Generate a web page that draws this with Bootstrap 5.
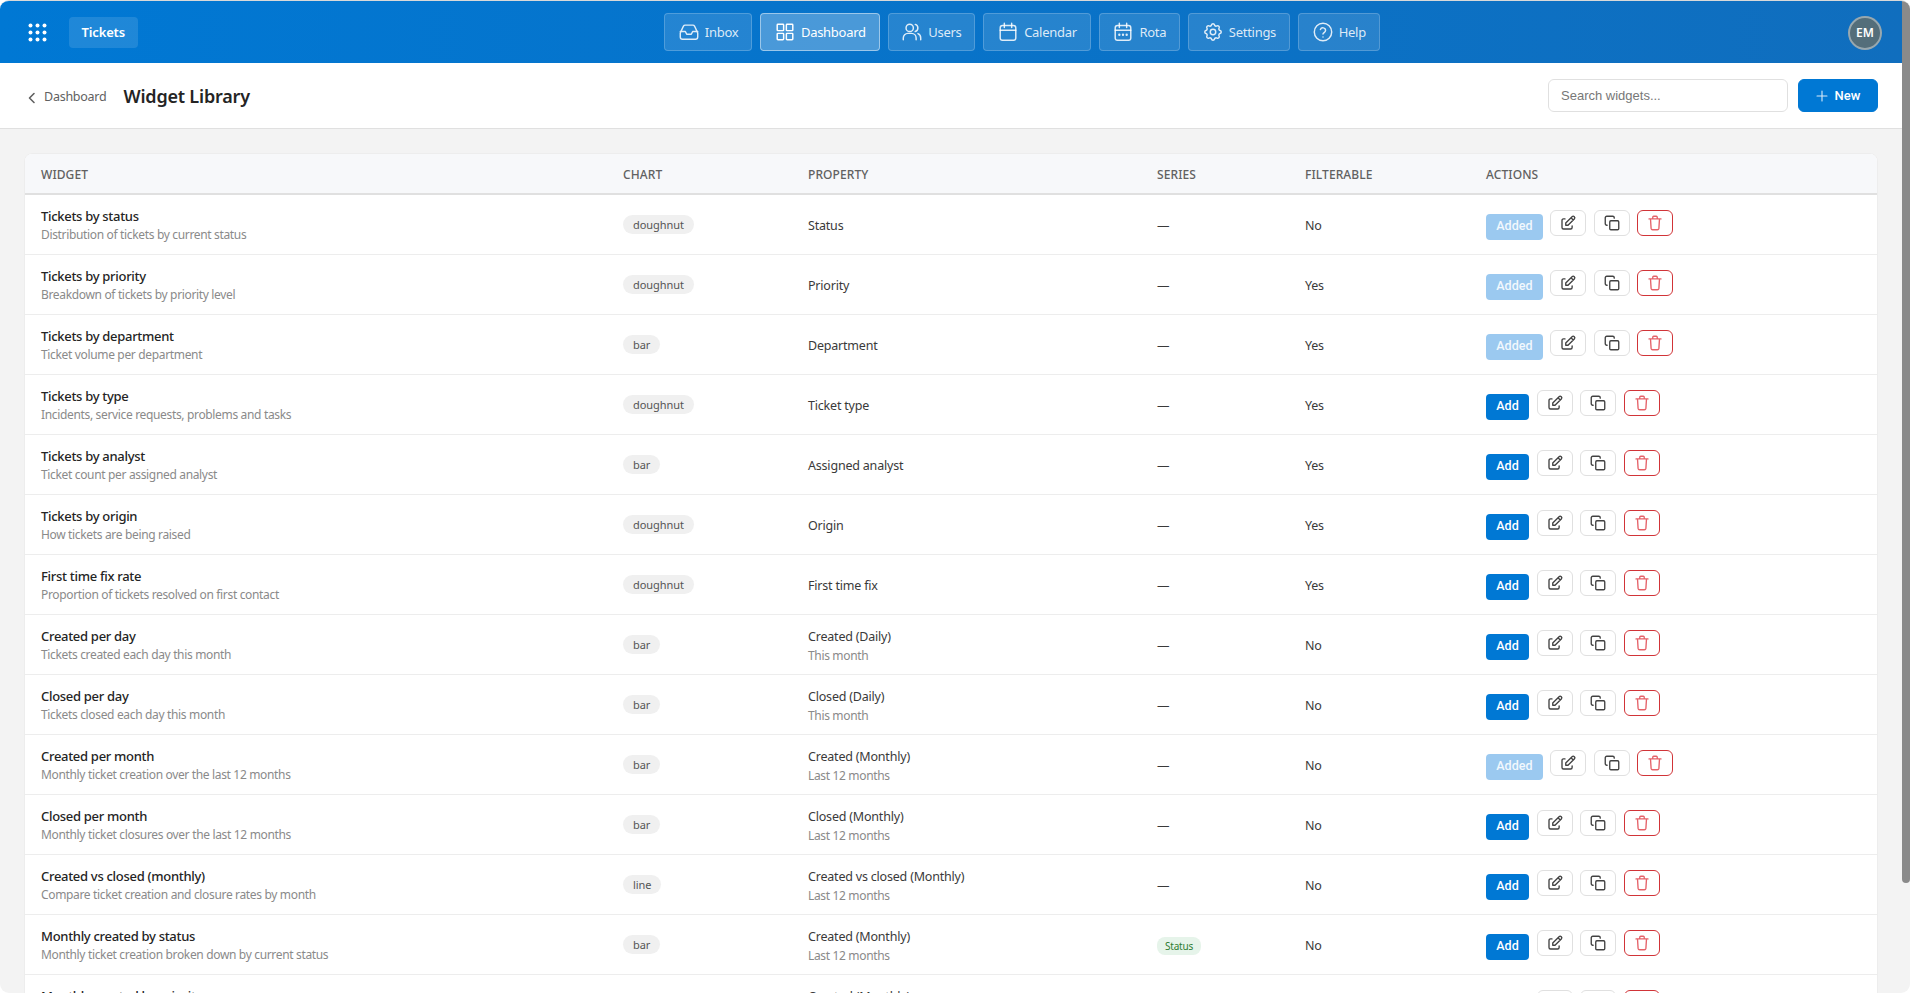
<!DOCTYPE html>
<html lang="en">
<head>
<meta charset="utf-8">
<title>Widget Library</title>
<link rel="stylesheet" href="https://cdn.jsdelivr.net/npm/bootstrap@5.3.0/dist/css/bootstrap.min.css">
<style>
html,body{height:100%;overflow:hidden;background:#fff}
body{font-family:"Noto Sans","Open Sans",sans-serif;color:#242424;font-size:13px}
.app-frame{height:993px;border-top:1px solid #d9d9d9;border-radius:9px;overflow:hidden;display:flex}
.app-main{flex:1 1 auto;min-width:0;background:#f3f3f3;overflow:hidden}
.app-scroll{width:8px;background:#f3f3f3;flex:none}
.app-scroll-thumb{height:882px;background:#8a8a8a;border-radius:0 0 4px 4px}
.top-bar{height:62px;background:linear-gradient(90deg,#0078d4,#106ebe);padding:1px 20px 0 27.5px;position:relative}
.grid-btn{width:19px;height:19px;color:#fff;margin-right:22.5px}
.app-chip{height:31px;padding:0 12.5px;background:rgba(255,255,255,.12);color:#fff;font-weight:600;font-size:13px;border-radius:4px;letter-spacing:-.15px}
.main-nav{position:absolute;left:664px;top:12px;gap:8px}
.nav-tile{height:38px;padding:1px 12.8px 0;display:flex;align-items:center;gap:5px;color:rgba(255,255,255,.85);background:rgba(255,255,255,.12);border:1px solid rgba(255,255,255,.2);border-radius:4px;font-size:13px;letter-spacing:-.28px;text-decoration:none}
.nav-tile.on{background:rgba(255,255,255,.27);border-color:rgba(255,255,255,.45);color:#fff}
.nav-tile svg{width:22px;height:22px;flex:none;margin-top:-1px}
.user-dot{width:34px;height:34px;border-radius:50%;background:#546e7a;border:2px solid rgba(255,255,255,.4);color:#fff;font-weight:600;font-size:12px}
.sub-bar{height:66px;background:#fff;border-bottom:1px solid #e0e0e0;padding:0 24px 0 28px}
.crumb-group{padding-top:2px}
.crumb{color:#616161;font-size:12.5px;letter-spacing:-.25px;text-decoration:none;gap:8px;margin-right:17px;padding-top:2px}
.page-name{font-size:18px;font-weight:600;letter-spacing:-.2px;color:#242424;margin:0}
.find-box{width:240px;height:33px;border:1px solid #e0e0e0;border-radius:6px;font-family:"Liberation Sans",sans-serif;font-size:13px;padding:0 12px;margin-right:10px;box-shadow:none}
.find-box::placeholder{color:#777}
.new-btn{width:80px;height:33px;background:#0078d4;border-color:#0078d4;color:#fff;font-family:"Roboto",sans-serif;font-size:13px;font-weight:500;border-radius:6px;gap:7px;padding:0}
.new-btn svg{stroke-width:1.1;opacity:.85}
.page-body{padding:24px 24px 0 24px}
.widget-card{border:1px solid #ededed;border-radius:8px;overflow:hidden;background:#fff}
.widget-table{table-layout:fixed;width:100%;margin:0;--bs-table-color:#242424}
.widget-table th{height:40px;background:#f7f8fa;border-bottom:2px solid #e0e0e0;padding:3px 16px 0;font-size:12px;font-weight:500;color:#616161;letter-spacing:.1px;text-transform:uppercase;vertical-align:middle}
.widget-table td{height:60px;padding:3px 16px 0;border-bottom:1px solid #ededed;vertical-align:middle;font-size:12.5px;letter-spacing:-.2px;color:#3a3a3a}
.widget-table td:nth-child(2){padding-top:2px}
.widget-table td:nth-child(3),.widget-table td:nth-child(4),.widget-table td:nth-child(5){padding-top:5px}
.widget-table td:nth-child(3) .item-desc{margin-top:0}
.item-name{font-size:13px;font-weight:500;color:#242424;line-height:18px;letter-spacing:-.3px}
.item-desc{font-size:12px;color:#8a8a8a;line-height:18px;letter-spacing:-.34px;margin-top:1px}
.type-pill{display:inline-block;background:#f0f0f0;color:#555;border-radius:10px;font-size:11px;font-weight:400;padding:0 10px;line-height:19px;letter-spacing:-.05px}
.series-pill{display:inline-block;background:#e6f4ea;color:#2e7d32;border-radius:8px;font-size:10px;padding:0 8px;line-height:18px;letter-spacing:-.2px}
.act-row{display:flex;gap:7.5px;align-items:flex-start;margin-bottom:2px}
.add-btn{height:26px;width:43px;margin-top:4px;background:#0078d4;border:0;border-radius:4px;color:#fff;font-family:"Roboto",sans-serif;font-size:12.5px;font-weight:500;padding:0}
.add-btn.done{width:56.8px;background:#9bc9f0;color:#f2f8fd}
.tool-btn{height:26px;width:36px;background:#fff;border:1px solid #e0e0e0;border-radius:6px;color:#424242;padding:0;display:flex;align-items:center;justify-content:center}
.tool-btn.warn{border-color:#d13438;color:#e5636a}
.tool-btn svg{width:18px;height:18px;stroke-width:1.8}
.ico{fill:none;stroke:currentColor;stroke-width:1.6;stroke-linecap:round;stroke-linejoin:round}
</style>
</head>
<body>
<svg width="0" height="0" class="position-absolute">
<symbol id="i-inbox" viewBox="0 0 24 24"><path d="M2.500 13 6 5.500A2 2 0 0 1 7.800 4.500h8.400A2 2 0 0 1 18 5.500l3.500 7.500v4.500a2.500 2.500 0 0 1-2.500 2.500H5a2.500 2.500 0 0 1-2.500-2.500zM2.500 11.500h5.500l1.500 3h5l1.500-3h5.500"/></symbol>
<symbol id="i-dash" viewBox="0 0 24 24"><rect x="3.500" y="3.500" width="7" height="7" rx=".8"/><rect x="13.500" y="3.500" width="7" height="7" rx=".8"/><rect x="3.500" y="13.500" width="7" height="7" rx=".8"/><rect x="13.500" y="13.500" width="7" height="7" rx=".8"/></symbol>
<symbol id="i-users" viewBox="0 0 24 24"><circle cx="9.500" cy="7.500" r="4"/><path d="M2.500 20.500v-2a5 5 0 0 1 5-5h4a5 5 0 0 1 5 5v2M15.500 3.700a4 4 0 0 1 0 7.700M18.500 13.700a5 5 0 0 1 3 4.800v2"/></symbol>
<symbol id="i-cal" viewBox="0 0 24 24"><rect x="3.500" y="5" width="17" height="16" rx="2.500"/><path d="M8 2.500V7M16 2.500V7M3.500 10h17"/></symbol>
<symbol id="i-rota" viewBox="0 0 24 24"><rect x="3.500" y="5" width="17" height="16" rx="2.500"/><path d="M8 2.500V7M16 2.500V7M3.500 10h17"/><path d="M8 15h.01M12 15h.01M16 15h.01" stroke-width="2.600"/></symbol>
<symbol id="i-gear" viewBox="0 0 24 24"><path d="M10.325 4.317c.426-1.756 2.924-1.756 3.350 0a1.724 1.724 0 0 0 2.573 1.066c1.543-.94 3.310.826 2.370 2.370a1.724 1.724 0 0 0 1.065 2.572c1.756.426 1.756 2.924 0 3.350a1.724 1.724 0 0 0-1.066 2.573c.94 1.543-.826 3.310-2.370 2.370a1.724 1.724 0 0 0-2.572 1.065c-.426 1.756-2.924 1.756-3.350 0a1.724 1.724 0 0 0-2.573-1.066c-1.543.94-3.310-.826-2.370-2.370a1.724 1.724 0 0 0-1.065-2.572c-1.756-.426-1.756-2.924 0-3.350a1.724 1.724 0 0 0 1.066-2.573c-.94-1.543.826-3.310 2.370-2.370 1 .608 2.296.07 2.572-1.065z"/><circle cx="12" cy="12" r="3"/></symbol>
<symbol id="i-help" viewBox="0 0 24 24"><circle cx="12" cy="12" r="9.500"/><path d="M9.200 9.300a2.900 2.900 0 0 1 5.600 1c0 2-2.800 2.500-2.800 4M12 17.500h.01"/></symbol>
<symbol id="i-edit" viewBox="0 0 24 24"><path d="M8 6.500H6a2 2 0 0 0-2 2V18a2 2 0 0 0 2 2h9.500a2 2 0 0 0 2-2v-2"/><path d="M20.400 6.600a2.100 2.100 0 0 0-3-3L9 12v3h3zM16 5l3 3"/></symbol>
<symbol id="i-copy" viewBox="0 0 24 24"><rect x="9" y="9" width="12" height="12" rx="1.500"/><path d="M5.500 15H5a2 2 0 0 1-2-2V5a2 2 0 0 1 2-2h8a2 2 0 0 1 2 2v.5"/></symbol>
<symbol id="i-trash" viewBox="0 0 24 24"><path d="M4 6.500h16M9 6.500V4.300A1.300 1.300 0 0 1 10.300 3h3.400A1.300 1.300 0 0 1 15 4.300v2.200M6 6.500l.8 12.700A2 2 0 0 0 8.800 21h6.400a2 2 0 0 0 2-1.800L18 6.500"/></symbol>
</svg>
<div class="app-frame">
<div class="app-main">
<header class="top-bar d-flex align-items-center justify-content-between">
<div class="d-flex align-items-center">
<svg class="grid-btn" viewBox="0 0 19 19" fill="currentColor"><circle cx="2.500" cy="2.500" r="2"/><circle cx="9.500" cy="2.500" r="2"/><circle cx="16.500" cy="2.500" r="2"/><circle cx="2.500" cy="9.500" r="2"/><circle cx="9.500" cy="9.500" r="2"/><circle cx="16.500" cy="9.500" r="2"/><circle cx="2.500" cy="16.500" r="2"/><circle cx="9.500" cy="16.500" r="2"/><circle cx="16.500" cy="16.500" r="2"/></svg>
<div class="app-chip d-flex align-items-center">Tickets</div>
</div>
<nav class="main-nav d-flex">
<a class="nav-tile" href="#"><svg class="ico"><use href="#i-inbox"/></svg>Inbox</a>
<a class="nav-tile on" href="#"><svg class="ico"><use href="#i-dash"/></svg>Dashboard</a>
<a class="nav-tile" href="#"><svg class="ico"><use href="#i-users"/></svg>Users</a>
<a class="nav-tile" href="#"><svg class="ico"><use href="#i-cal"/></svg>Calendar</a>
<a class="nav-tile" href="#"><svg class="ico"><use href="#i-rota"/></svg>Rota</a>
<a class="nav-tile" href="#"><svg class="ico"><use href="#i-gear"/></svg>Settings</a>
<a class="nav-tile" href="#"><svg class="ico"><use href="#i-help"/></svg>Help</a>
</nav>
<div class="user-dot d-flex align-items-center justify-content-center">EM</div>
</header>
<div class="sub-bar d-flex align-items-center justify-content-between">
<div class="crumb-group d-flex align-items-center">
<a class="crumb d-flex align-items-center" href="#"><svg class="ico" width="8" height="12" viewBox="0 0 8 12"><path d="M6 1.500 1.500 6 6 10.500"/></svg>Dashboard</a>
<h1 class="page-name">Widget Library</h1>
</div>
<div class="d-flex align-items-center">
<input class="form-control find-box" type="text" placeholder="Search widgets...">
<button class="btn new-btn d-flex align-items-center justify-content-center" type="button"><svg class="ico" width="12" height="12" viewBox="0 0 12 12"><path d="M6 1v10M1 6h10"/></svg>New</button>
</div>
</div>
<main class="page-body">
<div class="card widget-card">
<table class="table widget-table">
<colgroup><col style="width:582px"><col style="width:185px"><col style="width:349px"><col style="width:148px"><col style="width:181px"><col></colgroup>
<thead><tr><th>Widget</th><th>Chart</th><th>Property</th><th>Series</th><th>Filterable</th><th>Actions</th></tr></thead>
<tbody>
<tr><td><div class="item-name">Tickets by status</div><div class="item-desc">Distribution of tickets by current status</div></td><td><span class="type-pill">doughnut</span></td><td>Status</td><td>—</td><td>No</td><td><div class="act-row"><button class="add-btn done">Added</button><button class="tool-btn"><svg class="ico"><use href="#i-edit"/></svg></button><button class="tool-btn"><svg class="ico"><use href="#i-copy"/></svg></button><button class="tool-btn warn"><svg class="ico"><use href="#i-trash"/></svg></button></div></td></tr>
<tr><td><div class="item-name">Tickets by priority</div><div class="item-desc">Breakdown of tickets by priority level</div></td><td><span class="type-pill">doughnut</span></td><td>Priority</td><td>—</td><td>Yes</td><td><div class="act-row"><button class="add-btn done">Added</button><button class="tool-btn"><svg class="ico"><use href="#i-edit"/></svg></button><button class="tool-btn"><svg class="ico"><use href="#i-copy"/></svg></button><button class="tool-btn warn"><svg class="ico"><use href="#i-trash"/></svg></button></div></td></tr>
<tr><td><div class="item-name">Tickets by department</div><div class="item-desc">Ticket volume per department</div></td><td><span class="type-pill">bar</span></td><td>Department</td><td>—</td><td>Yes</td><td><div class="act-row"><button class="add-btn done">Added</button><button class="tool-btn"><svg class="ico"><use href="#i-edit"/></svg></button><button class="tool-btn"><svg class="ico"><use href="#i-copy"/></svg></button><button class="tool-btn warn"><svg class="ico"><use href="#i-trash"/></svg></button></div></td></tr>
<tr><td><div class="item-name">Tickets by type</div><div class="item-desc">Incidents, service requests, problems and tasks</div></td><td><span class="type-pill">doughnut</span></td><td>Ticket type</td><td>—</td><td>Yes</td><td><div class="act-row"><button class="add-btn">Add</button><button class="tool-btn"><svg class="ico"><use href="#i-edit"/></svg></button><button class="tool-btn"><svg class="ico"><use href="#i-copy"/></svg></button><button class="tool-btn warn"><svg class="ico"><use href="#i-trash"/></svg></button></div></td></tr>
<tr><td><div class="item-name">Tickets by analyst</div><div class="item-desc">Ticket count per assigned analyst</div></td><td><span class="type-pill">bar</span></td><td>Assigned analyst</td><td>—</td><td>Yes</td><td><div class="act-row"><button class="add-btn">Add</button><button class="tool-btn"><svg class="ico"><use href="#i-edit"/></svg></button><button class="tool-btn"><svg class="ico"><use href="#i-copy"/></svg></button><button class="tool-btn warn"><svg class="ico"><use href="#i-trash"/></svg></button></div></td></tr>
<tr><td><div class="item-name">Tickets by origin</div><div class="item-desc">How tickets are being raised</div></td><td><span class="type-pill">doughnut</span></td><td>Origin</td><td>—</td><td>Yes</td><td><div class="act-row"><button class="add-btn">Add</button><button class="tool-btn"><svg class="ico"><use href="#i-edit"/></svg></button><button class="tool-btn"><svg class="ico"><use href="#i-copy"/></svg></button><button class="tool-btn warn"><svg class="ico"><use href="#i-trash"/></svg></button></div></td></tr>
<tr><td><div class="item-name">First time fix rate</div><div class="item-desc">Proportion of tickets resolved on first contact</div></td><td><span class="type-pill">doughnut</span></td><td>First time fix</td><td>—</td><td>Yes</td><td><div class="act-row"><button class="add-btn">Add</button><button class="tool-btn"><svg class="ico"><use href="#i-edit"/></svg></button><button class="tool-btn"><svg class="ico"><use href="#i-copy"/></svg></button><button class="tool-btn warn"><svg class="ico"><use href="#i-trash"/></svg></button></div></td></tr>
<tr><td><div class="item-name">Created per day</div><div class="item-desc">Tickets created each day this month</div></td><td><span class="type-pill">bar</span></td><td><div>Created (Daily)</div><div class="item-desc">This month</div></td><td>—</td><td>No</td><td><div class="act-row"><button class="add-btn">Add</button><button class="tool-btn"><svg class="ico"><use href="#i-edit"/></svg></button><button class="tool-btn"><svg class="ico"><use href="#i-copy"/></svg></button><button class="tool-btn warn"><svg class="ico"><use href="#i-trash"/></svg></button></div></td></tr>
<tr><td><div class="item-name">Closed per day</div><div class="item-desc">Tickets closed each day this month</div></td><td><span class="type-pill">bar</span></td><td><div>Closed (Daily)</div><div class="item-desc">This month</div></td><td>—</td><td>No</td><td><div class="act-row"><button class="add-btn">Add</button><button class="tool-btn"><svg class="ico"><use href="#i-edit"/></svg></button><button class="tool-btn"><svg class="ico"><use href="#i-copy"/></svg></button><button class="tool-btn warn"><svg class="ico"><use href="#i-trash"/></svg></button></div></td></tr>
<tr><td><div class="item-name">Created per month</div><div class="item-desc">Monthly ticket creation over the last 12 months</div></td><td><span class="type-pill">bar</span></td><td><div>Created (Monthly)</div><div class="item-desc">Last 12 months</div></td><td>—</td><td>No</td><td><div class="act-row"><button class="add-btn done">Added</button><button class="tool-btn"><svg class="ico"><use href="#i-edit"/></svg></button><button class="tool-btn"><svg class="ico"><use href="#i-copy"/></svg></button><button class="tool-btn warn"><svg class="ico"><use href="#i-trash"/></svg></button></div></td></tr>
<tr><td><div class="item-name">Closed per month</div><div class="item-desc">Monthly ticket closures over the last 12 months</div></td><td><span class="type-pill">bar</span></td><td><div>Closed (Monthly)</div><div class="item-desc">Last 12 months</div></td><td>—</td><td>No</td><td><div class="act-row"><button class="add-btn">Add</button><button class="tool-btn"><svg class="ico"><use href="#i-edit"/></svg></button><button class="tool-btn"><svg class="ico"><use href="#i-copy"/></svg></button><button class="tool-btn warn"><svg class="ico"><use href="#i-trash"/></svg></button></div></td></tr>
<tr><td><div class="item-name">Created vs closed (monthly)</div><div class="item-desc">Compare ticket creation and closure rates by month</div></td><td><span class="type-pill">line</span></td><td><div>Created vs closed (Monthly)</div><div class="item-desc">Last 12 months</div></td><td>—</td><td>No</td><td><div class="act-row"><button class="add-btn">Add</button><button class="tool-btn"><svg class="ico"><use href="#i-edit"/></svg></button><button class="tool-btn"><svg class="ico"><use href="#i-copy"/></svg></button><button class="tool-btn warn"><svg class="ico"><use href="#i-trash"/></svg></button></div></td></tr>
<tr><td><div class="item-name">Monthly created by status</div><div class="item-desc">Monthly ticket creation broken down by current status</div></td><td><span class="type-pill">bar</span></td><td><div>Created (Monthly)</div><div class="item-desc">Last 12 months</div></td><td><span class="series-pill">Status</span></td><td>No</td><td><div class="act-row"><button class="add-btn">Add</button><button class="tool-btn"><svg class="ico"><use href="#i-edit"/></svg></button><button class="tool-btn"><svg class="ico"><use href="#i-copy"/></svg></button><button class="tool-btn warn"><svg class="ico"><use href="#i-trash"/></svg></button></div></td></tr>
<tr><td><div class="item-name">Monthly created by priority</div><div class="item-desc">Monthly ticket creation broken down by priority</div></td><td><span class="type-pill">bar</span></td><td><div>Created (Monthly)</div><div class="item-desc">Last 12 months</div></td><td><span class="series-pill">Priority</span></td><td>No</td><td><div class="act-row"><button class="add-btn">Add</button><button class="tool-btn"><svg class="ico"><use href="#i-edit"/></svg></button><button class="tool-btn"><svg class="ico"><use href="#i-copy"/></svg></button><button class="tool-btn warn"><svg class="ico"><use href="#i-trash"/></svg></button></div></td></tr>
</tbody>
</table>
</div>
</main>
</div>
<div class="app-scroll"><div class="app-scroll-thumb"></div></div>
</div>
<script src="https://cdn.jsdelivr.net/npm/bootstrap@5.3.0/dist/js/bootstrap.bundle.min.js"></script>
</body>
</html>
